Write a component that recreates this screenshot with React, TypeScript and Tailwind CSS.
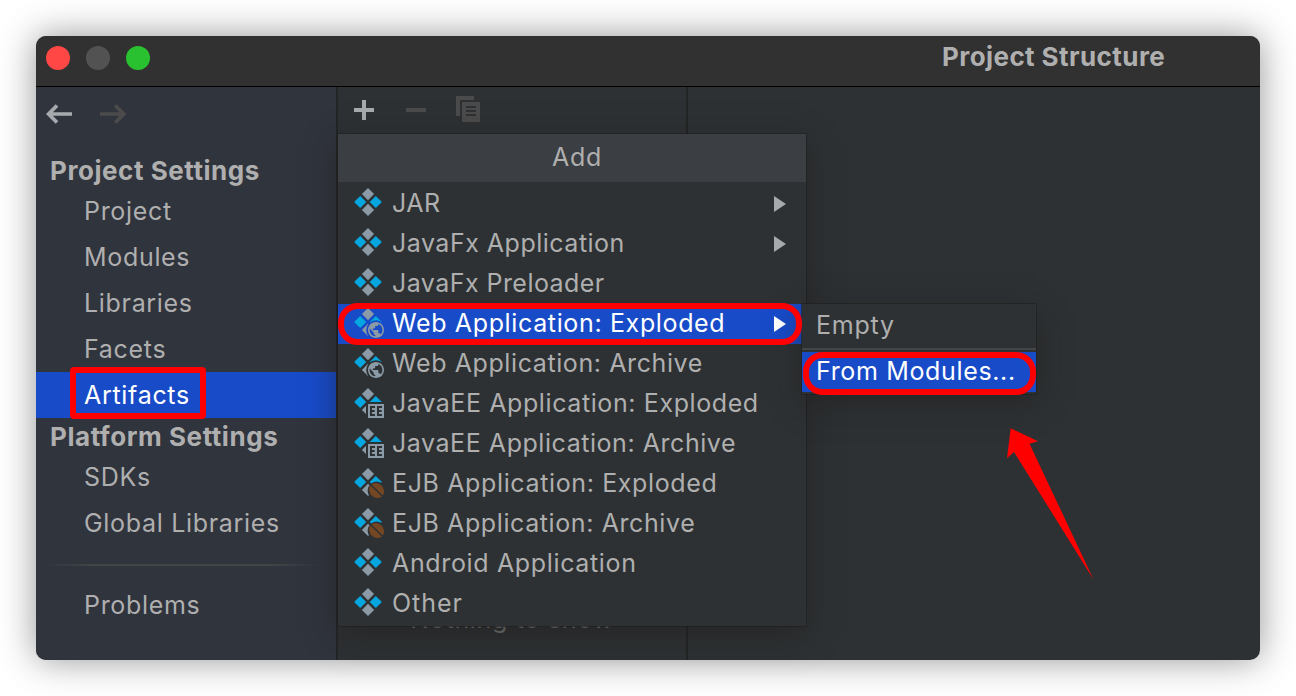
import React from "react";

type Badge = "web" | "ee" | "ejb";

function Diamonds({ badge, bg }: { badge?: Badge; bg: string }) {
  return (
    <svg width="32" height="32" viewBox="0 0 32 32" className="block shrink-0">
      <path d="M16 2l6.1 6.1L16 14.200l-6.100-6.100z" fill="#8a9aa6" />
      <path d="M16 17.800l6.100 6.100L16 30l-6.100-6.100z" fill="#8a9aa6" />
      <path d="M8.200 9.900l6.100 6.100-6.100 6.100L2.100 16z" fill="#04a7e0" />
      <path d="M23.800 9.900l6.100 6.100-6.100 6.100L17.700 16z" fill="#04a7e0" />
      {badge === "web" && (
        <g>
          <circle cx="24" cy="24" r="9.800" fill={bg} />
          <path
            transform="translate(14.400 14.400) scale(0.8)"
            d="M12 2C6.480 2 2 6.480 2 12s4.480 10 10 10 10-4.480 10-10S17.520 2 12 2zm-1 17.930c-3.950-.49-7-3.850-7-7.930 0-.62.08-1.210.21-1.790L9 15v1c0 1.100.9 2 2 2v1.930zm6.900-2.540c-.26-.81-1-1.390-1.900-1.390h-1v-3c0-.55-.45-1-1-1H8v-2h2c.55 0 1-.45 1-1V7h2c1.100 0 2-.9 2-2v-.41c2.930 1.190 5 4.060 5 7.410 0 2.080-.8 3.970-2.100 5.390z"
            fill="#8a9aa6"
          />
        </g>
      )}
      {badge === "ee" && (
        <g>
          <path d="M14 16h18v16H14z" fill={bg} />
          <path d="M16 18h16v14H16z" fill="#8a9aa6" />
          <path
            d="M23 21H19v8h4M19 25h3.600M30 21H26v8h4M26 25h3.600"
            fill="none"
            stroke={bg}
            strokeWidth="2"
          />
        </g>
      )}
      {badge === "ejb" && (
        <g>
          <circle cx="24.600" cy="24.500" r="9" fill={bg} />
          <ellipse cx="24.600" cy="24.500" rx="8" ry="6.900" transform="rotate(45 24.600 24.500)" fill="#744621" />
          <path d="M18 18l13.200 13" stroke={bg} strokeWidth="1.500" />
        </g>
      )}
    </svg>
  );
}

const menu: { label: string; badge?: Badge; arrow?: boolean; active?: boolean; track: string }[] = [
  { label: "JAR", arrow: true, track: "tracking-[0.5px]" },
  { label: "JavaFx Application", arrow: true, track: "tracking-[0.5px]" },
  { label: "JavaFx Preloader", track: "tracking-[0.450px]" },
  { label: "Web Application: Exploded", badge: "web", arrow: true, active: true, track: "tracking-[0.640px]" },
  { label: "Web Application: Archive", badge: "web", track: "tracking-[0.600px]" },
  { label: "JavaEE Application: Exploded", badge: "ee", track: "tracking-[0.600px]" },
  { label: "JavaEE Application: Archive", badge: "ee", track: "tracking-[0.550px]" },
  { label: "EJB Application: Exploded", badge: "ejb", track: "tracking-[0.630px]" },
  { label: "EJB Application: Archive", badge: "ejb", track: "tracking-[0.600px]" },
  { label: "Android Application", track: "tracking-[0.650px]" },
  { label: "Other", track: "tracking-[0.950px]" },
];

function SideItem({ label, active }: { label: string; active?: boolean }) {
  return (
    <div
      className={
        active
          ? "flex h-[46px] items-center bg-[#184bc8] pl-12 tracking-[0.7px] text-white"
          : "flex h-[46px] items-center pl-12 tracking-[0.68px]"
      }
    >
      {label}
    </div>
  );
}

function SideHeading({ label }: { label: string }) {
  return (
    <div className="flex h-9 items-center pt-[2px] pl-[14px] text-[26px] font-bold tracking-[0.55px]">{label}</div>
  );
}

export default function App() {
  return (
    <div className="h-[696px] w-[1296px] overflow-hidden bg-white p-9 font-['Inter',sans-serif] text-[25px] leading-none tracking-[0.5px] whitespace-nowrap text-[#afafaf]">
      <div className="relative h-[624px] w-[1224px] rounded-[10px] shadow-[0_0_36px_rgba(0,0,0,0.42)]">
        <div className="flex h-full flex-col overflow-hidden rounded-[10px] bg-[#2d3133]">
          <header className="flex h-[51px] shrink-0 border-b border-black bg-[#313131]">
            <div className="flex gap-4 pt-[10px] pl-[10px]">
              <span className="size-6 rounded-full bg-[#ff4746]" />
              <span className="size-6 rounded-full bg-[#525252]" />
              <span className="size-6 rounded-full bg-[#2ac131]" />
            </div>
            <h1 className="flex h-[42px] items-center pl-[792px] text-[26px] font-bold tracking-[0.42px]">
              Project Structure
            </h1>
          </header>

          <div className="flex min-h-0 flex-1">
            <aside className="flex w-[300px] shrink-0 flex-col bg-[#30343d]">
              <div className="flex h-[65px] gap-[26px] pt-[17px] pl-[10px]">
                <svg width="28" height="20" viewBox="0 0 28 20" fill="none" stroke="#a7aaad">
                  <path d="M26 10H2.500M11 1.500L2.600 10l8.400 8.500" strokeWidth="3.700" />
                </svg>
                <svg width="28" height="20" viewBox="0 0 28 20" fill="none" stroke="#4b4b4b">
                  <path d="M0 10h24M15.300 1.500L23.800 10l-8.500 8.500" strokeWidth="3.700" />
                </svg>
              </div>
              <SideHeading label="Project Settings" />
              <SideItem label="Project" />
              <SideItem label="Modules" />
              <SideItem label="Libraries" />
              <SideItem label="Facets" />
              <SideItem label="Artifacts" active />
              <SideHeading label="Platform Settings" />
              <SideItem label="SDKs" />
              <SideItem label="Global Libraries" />
              <div className="mr-4 ml-2 mt-[18px] mb-4 flex h-[2px] shrink-0">
                <div className="w-12 bg-linear-to-r from-transparent to-[#434446]" />
                <div className="flex-1 bg-[#434446]" />
                <div className="w-12 bg-linear-to-l from-transparent to-[#434446]" />
              </div>
              <SideItem label="Problems" />
            </aside>

            <section className="flex w-[352px] shrink-0 flex-col justify-between border-x-2 border-[#232424]">
              <div className="flex pt-[9px] pl-4">
                <svg width="130" height="28" viewBox="0 0 130 28">
                  <path d="M0 12h8V4h4v8h8v4h-8v8H8v-8H0z" fill="#a7aaad" />
                  <path d="M52 12h20v4H52z" fill="#4b4b4b" />
                  <path
                    d="M102 0h18v4h-14v16h-4zM108 6h18v20h-18zM112 10v2h10v-2zM112 14v2h10v-2zM112 18v2h10v-2z"
                    fill="#4b4b4b"
                    fillRule="evenodd"
                  />
                </svg>
              </div>
              <div className="pb-7 text-center tracking-[0.7px] text-[#747778]">Nothing to show</div>
            </section>
            <main className="flex-1" />
          </div>
        </div>

        <div className="absolute top-[98px] left-[302px] h-[492px] w-[468px] bg-[#2d3133] shadow-[0_0_0_1px_rgba(30,30,30,0.55),0_8px_28px_rgba(32,28,28,0.55)]">
          <div className="mb-[2px] flex h-12 items-center justify-center bg-[#3b3e42] pb-[2px]">
            <span className="pl-[10px] tracking-[0.7px]">Add</span>
          </div>
          {menu.map((m) => (
            <div
              key={m.label}
              className={
                m.active
                  ? "flex h-10 items-center bg-[#184bc8] pr-5 pl-[14px] text-white"
                  : "flex h-10 items-center pr-5 pl-[14px]"
              }
            >
              <div className="-mt-1">
                <Diamonds badge={m.badge} bg={m.active ? "#184bc8" : "#2d3133"} />
              </div>
              <span className={`flex-1 pb-[2px] pl-2 ${m.track}`}>{m.label}</span>
              {m.arrow && (
                <svg width="12" height="16" viewBox="0 0 12 16" fill={m.active ? "#ffffff" : "#a7aaad"}>
                  <path d="M0 0l12 8-12 8z" />
                </svg>
              )}
            </div>
          ))}
        </div>

        <div className="absolute top-[268px] left-[766px] h-[90px] w-[234px] bg-[#2d3133] shadow-[0_0_0_1px_rgba(30,30,30,0.55),0_8px_28px_rgba(32,28,28,0.5)]">
          <div className="flex h-[42px] items-center pl-[14px] tracking-[0.75px]">Empty</div>
          <div className="mt-[2px] mb-[2px] h-[2px] bg-[#434446]" />
          <div className="flex h-10 items-center bg-[#184bc8] pb-[2px] pl-[14px] tracking-[0.65px] text-white">
            From Modules...
          </div>
        </div>

        <div className="absolute top-[331px] left-[34px] h-[52px] w-[136px] rounded-[4px] border-6 border-[#fe0000]" />
        <div className="absolute top-[267px] left-[302px] h-[42px] w-[464px] rounded-[20px] border-6 border-[#fe0000]" />
        <div className="absolute top-[316px] left-[767px] h-[43px] w-[233px] rounded-[20px] border-6 border-[#fe0000]" />
        <svg className="absolute top-[390px] left-[968px]" width="92" height="156" viewBox="1004 426 92 156">
          <path d="M1010.700 428.300L1038 441.300 1029.500 443.700 1093.500 579.500 1014 452 1007 458.300z" fill="#fe0000" />
        </svg>
      </div>
    </div>
  );
}
